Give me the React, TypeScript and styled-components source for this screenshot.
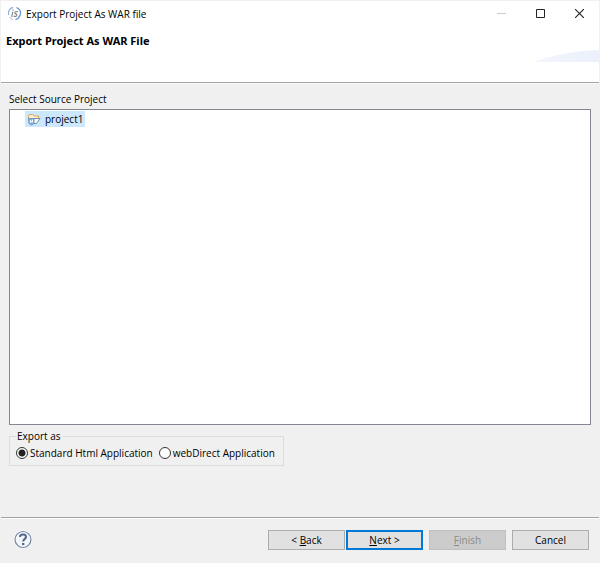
import React, { useState } from "react";
import styled, { createGlobalStyle } from "styled-components";

const GlobalStyle = createGlobalStyle`
  * { box-sizing: border-box; }
  body {
    margin: 0;
    background: #f0f0f0;
    color: #000;
    font: 10px/16px "Open Sans", "Noto Sans", sans-serif;
  }
  button, input { font: inherit; color: inherit; }
`;

const Dialog = styled.main`
  display: flex;
  flex-direction: column;
  min-height: 100vh;
  border: 1px solid #f0f0f0;
  border-width: 1px 1px 0 1px;
`;

const Header = styled.header`
  background: #fff;
  border-bottom: 1px solid #a5a5a5;
  box-shadow: 0 1px 0 #fafafa;
`;

const TitleBar = styled.div`
  display: flex;
  align-items: center;
  height: 25px;
  padding-left: 6px;
`;

const TitleText = styled.span`
  flex: 1;
  margin-left: 4px;
`;

const WindowButton = styled.button`
  display: grid;
  place-items: center;
  width: 39px;
  height: 24px;
  padding: 0;
  border: 0;
  background: none;
`;

const Banner = styled.div`
  display: flex;
  justify-content: space-between;
  height: 56px;
  padding-left: 5px;
`;

const Heading = styled.h1`
  margin: 7px 0 0;
  font: 700 11px/16px "Noto Sans", "Open Sans", sans-serif;
`;

const Swoosh = styled.svg`
  margin-top: 23px;
`;

const Body = styled.section`
  display: flex;
  flex: 1;
  flex-direction: column;
  align-items: flex-start;
  padding: 8px 8px 51px;
`;

const Tree = styled.div`
  flex: 1;
  align-self: stretch;
  margin-top: 2px;
  padding: 1px 15px;
  border: 1px solid #828790;
  background: #fff;
`;

const TreeItem = styled.button`
  display: flex;
  align-items: center;
  height: 16px;
  padding: 0 2px;
  border: 0;
  background: #cce8ff;
  svg { margin-right: 4px; }
`;

const Group = styled.fieldset`
  display: flex;
  gap: 6px;
  min-width: 0;
  margin: 3px 0 0;
  padding: 1px 8px 4px 6px;
  border: 1px solid #dcdcdc;
`;

const Legend = styled.legend`
  padding: 0 2px 0 1px;
`;

const RadioLabel = styled.label`
  display: flex;
  align-items: center;
  gap: 2px;
`;

const Radio = styled.input`
  appearance: none;
  width: 12px;
  height: 12px;
  margin: 0;
  border: 1px solid #333;
  border-radius: 50%;
  background: #fff;
  &:checked { background: radial-gradient(circle, #222 3px, #fff 4px); }
`;

const Footer = styled.footer`
  display: flex;
  align-items: center;
  justify-content: space-between;
  height: 46px;
  padding: 0 10px 2px 12px;
  border-top: 1px solid #a0a0a0;
  box-shadow: inset 0 1px 0 #fff;
`;

const HelpButton = styled.button`
  display: flex;
  padding: 0;
  border: 0;
  background: none;
`;

const Actions = styled.div`
  display: flex;
  gap: 6px;
`;

const Pair = styled.div`
  display: flex;
  gap: 1px;
`;

const PushButton = styled.button<{ $primary?: boolean }>`
  width: 77px;
  height: 20px;
  padding: 0;
  border: ${(p) => (p.$primary ? "2px solid #0078d7" : "1px solid #adadad")};
  background: #e1e1e1;
  line-height: 16px;
  &:disabled {
    border-color: #bfbfbf;
    background: #ccc;
    color: #8a8a8a;
  }
`;

const Underlined = styled.u`
  text-underline-offset: 1px;
`;

const AppIcon = () => (
  <svg width="15" height="15" viewBox="0 0 15 15" fill="none" aria-hidden="true">
    <path d="M6 1.5C2.5 2.2.8 5.5 1.7 9" stroke="#8fb1dc" strokeWidth="1.3" />
    <path d="M9.5 1.5c3.4 1.5 4.8 4.2 3.6 7.5-.7 2.3-2.2 4-4.6 4.7" stroke="#5e93d1" strokeWidth="1.2" />
    <path d="M2.5 11.2c1 1.3 2 1.9 3.4 2.3" stroke="#9ab9df" strokeWidth="1" />
    <path d="M5.7 5.8 4.7 11M6.1 3.5v1.2M10.8 5.9c-1.7-.6-3-.1-3 .9 0 1.3 2.1.9 2 2.4-.1 1.2-1.6 1.6-3.2.9" stroke="#8a8a8a" strokeWidth="1.2" />
  </svg>
);

const FolderIcon = () => (
  <svg width="14" height="14" viewBox="0 0 14 14" fill="none" aria-hidden="true">
    <path d="M1.5 7V4l1-1.5h3L7 4h4.5v2.5" fill="#fff3cf" stroke="#dda052" />
    <path d="M7 6.5h6L9.5 11.5H7" fill="#fff9e8" stroke="#6d93bd" />
    <path d="M1.5 6.5h5.5v5L4.5 13 2 11.5z" fill="#8db2dc" stroke="#6b96c6" />
    <path d="M3.5 8v3M5.5 7.5v3M3 9.5h2" stroke="#eef6ff" />
  </svg>
);

const HelpIcon = () => (
  <svg width="20" height="20" viewBox="0 0 20 20" fill="none" aria-hidden="true">
    <circle cx="10" cy="9.5" r="9.2" fill="#fff" />
    <circle cx="10" cy="9.5" r="8" fill="#f4f6fa" stroke="#7486a5" strokeWidth="1.2" />
    <path d="M7 7c0-3.3 6-3.2 6-.1 0 2-2.8 2-2.8 4.6" stroke="#536889" strokeWidth="2" />
    <path d="M9 13h2.3v2.1H9z" fill="#536889" />
  </svg>
);

export default function App() {
  const [format, setFormat] = useState("html");
  return (
    <>
      <GlobalStyle />
      <Dialog>
        <Header>
          <TitleBar>
            <AppIcon />
            <TitleText>Export Project As WAR file</TitleText>
            <WindowButton aria-label="Minimize" disabled>
              <svg width="9" height="9"><path d="M0 4.5h9" stroke="#ccc" /></svg>
            </WindowButton>
            <WindowButton aria-label="Maximize">
              <svg width="9" height="9"><path d="M.5.5h8v8h-8z" fill="none" stroke="#222" /></svg>
            </WindowButton>
            <WindowButton aria-label="Close">
              <svg width="9" height="9"><path d="m0 0 9 9M9 0 0 9" stroke="#222" strokeWidth="1.1" /></svg>
            </WindowButton>
          </TitleBar>
          <Banner>
            <Heading>Export Project As WAR File</Heading>
            <Swoosh width="65" height="14" viewBox="0 0 65 14" aria-hidden="true">
              <defs>
                <linearGradient id="swoosh">
                  <stop offset="0" stopColor="#f3f6fd" />
                  <stop offset="1" stopColor="#ecf0fb" />
                </linearGradient>
              </defs>
              <path d="M0 13C18 6 39 2 65 1v12z" fill="url(#swoosh)" />
            </Swoosh>
          </Banner>
        </Header>
        <Body>
          <span id="source-label">Select Source Project</span>
          <Tree role="tree" aria-labelledby="source-label">
            <TreeItem role="treeitem" aria-selected="true">
              <FolderIcon />
              project1
            </TreeItem>
          </Tree>
          <Group>
            <Legend>Export as</Legend>
            <RadioLabel>
              <Radio type="radio" name="format" checked={format === "html"} onChange={() => setFormat("html")} />
              Standard Html Application
            </RadioLabel>
            <RadioLabel>
              <Radio type="radio" name="format" checked={format === "web"} onChange={() => setFormat("web")} />
              webDirect Application
            </RadioLabel>
          </Group>
        </Body>
        <Footer>
          <HelpButton aria-label="Help"><HelpIcon /></HelpButton>
          <Actions>
            <Pair>
              <PushButton>&lt; <Underlined>B</Underlined>ack</PushButton>
              <PushButton $primary><Underlined>N</Underlined>ext &gt;</PushButton>
            </Pair>
            <PushButton disabled><Underlined>F</Underlined>inish</PushButton>
            <PushButton>Cancel</PushButton>
          </Actions>
        </Footer>
      </Dialog>
    </>
  );
}
